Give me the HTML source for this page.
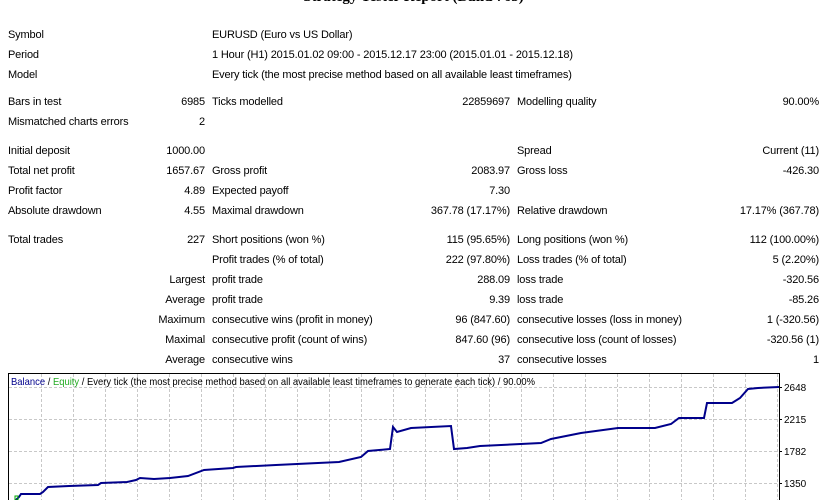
<!DOCTYPE html>
<html><head><meta charset="utf-8"><style>
body{margin:0;width:827px;height:500px;overflow:hidden;background:#fff;font-family:"Liberation Sans",sans-serif;font-size:11px;color:#000;position:relative}
.r{position:absolute;left:0;width:827px;height:14px;line-height:14px;letter-spacing:-0.15px}
.r span{position:absolute;white-space:nowrap}
.a{left:8px}.b{right:622px;text-align:right}.c{left:212px}.d{right:317px}.e{left:517px}.f{right:8px}
.t{position:absolute;top:-11px;left:0;width:827px;text-align:center;font-family:"Liberation Serif",serif;font-weight:bold;font-size:15px}
</style></head><body>
<div class="t">Strategy Tester Report (Build 765)</div>
<div class="r" style="top:28px"><span class="a">Symbol</span><span class="c">EURUSD (Euro vs US Dollar)</span></div>
<div class="r" style="top:48px"><span class="a">Period</span><span class="c">1 Hour (H1) 2015.01.02 09:00 - 2015.12.17 23:00 (2015.01.01 - 2015.12.18)</span></div>
<div class="r" style="top:68px"><span class="a">Model</span><span class="c">Every tick (the most precise method based on all available least timeframes)</span></div>
<div class="r" style="top:95px"><span class="a">Bars in test</span><span class="b">6985</span><span class="c">Ticks modelled</span><span class="d">22859697</span><span class="e">Modelling quality</span><span class="f">90.00%</span></div>
<div class="r" style="top:115px"><span class="a">Mismatched charts errors</span><span class="b">2</span></div>
<div class="r" style="top:144px"><span class="a">Initial deposit</span><span class="b">1000.00</span><span class="e">Spread</span><span class="f">Current (11)</span></div>
<div class="r" style="top:164px"><span class="a">Total net profit</span><span class="b">1657.67</span><span class="c">Gross profit</span><span class="d">2083.97</span><span class="e">Gross loss</span><span class="f">-426.30</span></div>
<div class="r" style="top:184px"><span class="a">Profit factor</span><span class="b">4.89</span><span class="c">Expected payoff</span><span class="d">7.30</span></div>
<div class="r" style="top:204px"><span class="a">Absolute drawdown</span><span class="b">4.55</span><span class="c">Maximal drawdown</span><span class="d">367.78 (17.17%)</span><span class="e">Relative drawdown</span><span class="f">17.17% (367.78)</span></div>
<div class="r" style="top:233px"><span class="a">Total trades</span><span class="b">227</span><span class="c">Short positions (won %)</span><span class="d">115 (95.65%)</span><span class="e">Long positions (won %)</span><span class="f">112 (100.00%)</span></div>
<div class="r" style="top:253px"><span class="c">Profit trades (% of total)</span><span class="d">222 (97.80%)</span><span class="e">Loss trades (% of total)</span><span class="f">5 (2.20%)</span></div>
<div class="r" style="top:273px"><span class="b">Largest</span><span class="c">profit trade</span><span class="d">288.09</span><span class="e">loss trade</span><span class="f">-320.56</span></div>
<div class="r" style="top:293px"><span class="b">Average</span><span class="c">profit trade</span><span class="d">9.39</span><span class="e">loss trade</span><span class="f">-85.26</span></div>
<div class="r" style="top:313px"><span class="b">Maximum</span><span class="c">consecutive wins (profit in money)</span><span class="d">96 (847.60)</span><span class="e">consecutive losses (loss in money)</span><span class="f">1 (-320.56)</span></div>
<div class="r" style="top:333px"><span class="b">Maximal</span><span class="c">consecutive profit (count of wins)</span><span class="d">847.60 (96)</span><span class="e">consecutive loss (count of losses)</span><span class="f">-320.56 (1)</span></div>
<div class="r" style="top:353px"><span class="b">Average</span><span class="c">consecutive wins</span><span class="d">37</span><span class="e">consecutive losses</span><span class="f">1</span></div>
<svg style="position:absolute;left:0;top:0" width="827" height="500">
<g stroke="#c8c8c8" stroke-dasharray="3,2" stroke-width="1">
<path d="M9 387.5H778M9 419.5H778M9 451.5H778M9 483.5H778"/>
<path d="M41.5 374V500M73.5 374V500M105.5 374V500M137.5 374V500M169.5 374V500M201.5 374V500M233.5 374V500M265.5 374V500M297.5 374V500M329.5 374V500M361.5 374V500M393.5 374V500M425.5 374V500M457.5 374V500M489.5 374V500M521.5 374V500M553.5 374V500M585.5 374V500M617.5 374V500M649.5 374V500M681.5 374V500M713.5 374V500M745.5 374V500M777.5 374V500"/>
</g>
<path d="M8.5 500V373.5H779.5V500" fill="none" stroke="#000"/>
<path d="M779 387.5h3M779 419.5h3M779 451.5h3M779 483.5h3" stroke="#000"/>
<g font-family="Liberation Sans,sans-serif" font-size="10" fill="#000">
<text x="784" y="391">2648</text><text x="784" y="423">2215</text><text x="784" y="455">1782</text><text x="784" y="487">1350</text>
</g>
<path d="M16 500L19 497L21 494L40 494L43 492L48 487L69 486L98 485L101 483L127 482L136 480L140 478L154 479L170 478L188 476L204 470L233 468L236 467L276 465L318 463L339 462L361 457L368 451L390 449L393 427L397 432L411 428L451 426L454 449L467 448L480 446L541 443L551 439L581 433L618 428L655 428L671 424L679 418L704 418L707 403L732 403L740 398L748 389L758 388L779 387" fill="none" stroke="#00008b" stroke-width="2"/>
<rect x="15" y="496" width="3" height="4" fill="none" stroke="#0a0"/>
<text x="11" y="385" font-family="Liberation Sans,sans-serif" font-size="10.5" fill="#00008b" textLength="524" lengthAdjust="spacingAndGlyphs">Balance <tspan fill="#000">/ </tspan><tspan fill="#22aa22">Equity</tspan><tspan fill="#000"> / Every tick (the most precise method based on all available least timeframes to generate each tick) / 90.00%</tspan></text>
</svg>
</body></html>
